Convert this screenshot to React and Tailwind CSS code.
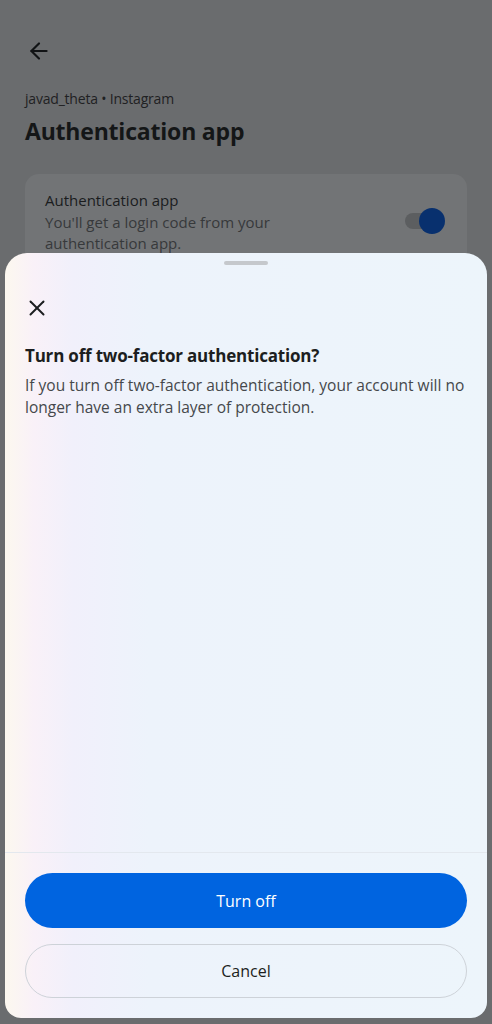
import { ArrowLeft, X } from 'lucide-react'

export default function App() {
  return (
    <div
      className="relative w-[492px] h-[1024px] overflow-hidden bg-[#58595b] text-[#1c1e20]"
      style={{ fontFamily: '"Open Sans", "Noto Sans", sans-serif' }}
    >
      {/* Dimmed page behind the sheet */}
      <div className="h-full bg-[#6a6c6e] px-[25px] pt-[38px]">
        <ArrowLeft size={26} strokeWidth={2} className="text-[#111315] ml-[1px]" />
        <p className="mt-[24px] text-[14px] text-[#1f2123] tracking-[-0.2px]">javad_theta • Instagram</p>
        <h1 className="mt-[5px] text-[23px] font-bold text-[#141617] tracking-[-0.2px]">Authentication app</h1>
        <div className="mt-[25px] rounded-[14px] bg-[#727476] pl-[20px] pr-[22px] pt-[15px] pb-[20px] flex items-center">
          <div className="flex-1">
            <p className="text-[15px] text-[#1a1c1e]">Authentication app</p>
            <p className="text-[15px] leading-[21px] text-[#37393b] mt-[1px]">
              You'll get a login code from your
              <br />
              authentication app.
            </p>
          </div>
          <div className="relative w-[40px] h-[26px] flex items-center">
            <div className="w-[36px] h-[16px] rounded-full bg-[#5c5e60]" />
            <div className="absolute right-0 w-[26px] h-[26px] rounded-full bg-[#08306e]" />
          </div>
        </div>
      </div>

      {/* Bottom sheet */}
      <div className="absolute left-[5px] right-[5px] top-[253px] bottom-[6px] rounded-t-[22px] rounded-b-[16px] overflow-hidden bg-[linear-gradient(90deg,#fcf8ef_0%,#f9f1f8_6%,#f1f0fb_14%,#edf3fb_30%,#edf5fb_100%)] flex flex-col">
        <div className="flex justify-center pt-[8px]">
          <div className="w-[44px] h-[4px] rounded-full bg-[#c5c8cc]" />
        </div>
        <div className="px-[20px] pt-[30px]">
          <X size={26} strokeWidth={1.8} className="text-[#1c1e20] -ml-[1px]" />
          <h2 className="mt-[22px] text-[17px] font-bold text-[#1c1e20] tracking-[-0.2px]">Turn off two-factor authentication?</h2>
          <p className="mt-[5px] text-[15.5px] leading-[22px] text-[#45484b]">
            If you turn off two-factor authentication, your account will no longer have an extra layer of protection.
          </p>
        </div>
        <div className="flex-1" />
        <div className="border-t border-[#e3e8ee] px-[20px] pt-[20px] pb-[20px] flex flex-col gap-[16px]">
          <button className="h-[55px] rounded-full bg-[#0064e0] text-white text-[16px] font-medium">
            Turn off
          </button>
          <button className="h-[54px] rounded-full border border-[#cdd2d8] text-[#1c1e20] text-[16px] font-medium">
            Cancel
          </button>
        </div>
      </div>
    </div>
  )
}
